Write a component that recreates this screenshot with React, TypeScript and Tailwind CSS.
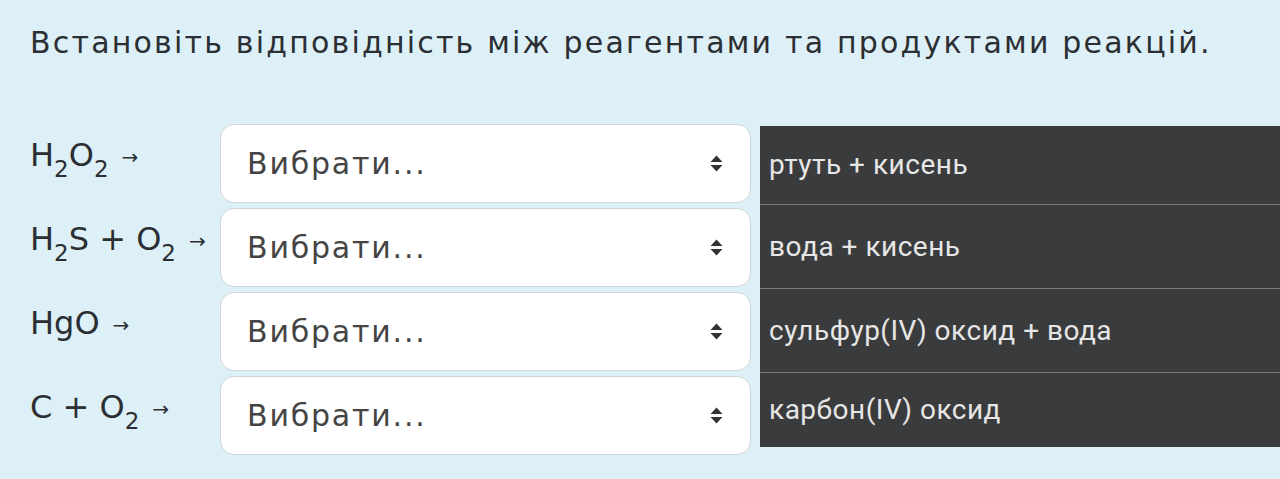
const Sub = ({ children }: { children: string }) => (
  <sub className="text-[23px] align-[-0.22em]">{children}</sub>
);

const Arrow = () => <span className="ml-[13px] text-[20px] align-[0.12em]">→</span>;

const rows = [
  { label: <>H<Sub>2</Sub>O<Sub>2</Sub><Arrow /></> },
  { label: <>H<Sub>2</Sub>S + O<Sub>2</Sub><Arrow /></> },
  { label: <>HgO<Arrow /></> },
  { label: <>C + O<Sub>2</Sub><Arrow /></> },
];

const answers = [
  { text: "ртуть + кисень", h: "h-[78px]" },
  { text: "вода + кисень", h: "h-[84px]" },
  { text: "сульфур(IV) оксид + вода", h: "h-[84px]" },
  { text: "карбон(IV) оксид", h: "h-[75px]" },
];

const SortIcon = () => (
  <svg width="13" height="17" viewBox="0 0 13 17" className="text-[#333]">
    <path d="M6.5 0.5 L12.5 7 L0.5 7 Z" fill="currentColor" />
    <path d="M0.5 10 L12.5 10 L6.5 16.5 Z" fill="currentColor" />
  </svg>
);

export default function App() {
  return (
    <div className="min-h-[479px] bg-[#def0f7] pl-[30px] pt-[21px] font-['DejaVu_Sans',sans-serif] text-[#2b2f33]">
      <h1 className="text-[30px] leading-[44px] font-normal tracking-[2.2px] whitespace-nowrap">
        Встановіть відповідність між реагентами та продуктами реакцій.
      </h1>

      <div className="mt-[59px] flex">
        <div className="flex w-[730px] flex-col gap-[5px]">
          {rows.map((r, i) => (
            <div key={i} className="flex">
              <div className="w-[190px] pt-[8px] text-[32px] leading-[46px] whitespace-nowrap">{r.label}</div>
              <div className="flex h-[79px] w-[531px] items-center justify-between rounded-[14px] border border-[#cfd6da] bg-white pl-[26px] pr-[27px]">
                <span className="text-[30px] tracking-[1.8px] text-[#444]">Вибрати...</span>
                <SortIcon />
              </div>
            </div>
          ))}
        </div>

        <div className="mt-[2px] flex h-fit flex-1 flex-col bg-[#3a3b3d] font-['Roboto',sans-serif] text-[28px] text-[#e6e6e6]">
          {answers.map((a, i) => (
            <div
              key={i}
              className={`flex items-center pl-[9px] tracking-[0.5px] ${a.h} ${i > 0 ? "border-t border-[#7b7b7b]" : ""}`}
            >
              {a.text}
            </div>
          ))}
        </div>
      </div>
    </div>
  );
}
